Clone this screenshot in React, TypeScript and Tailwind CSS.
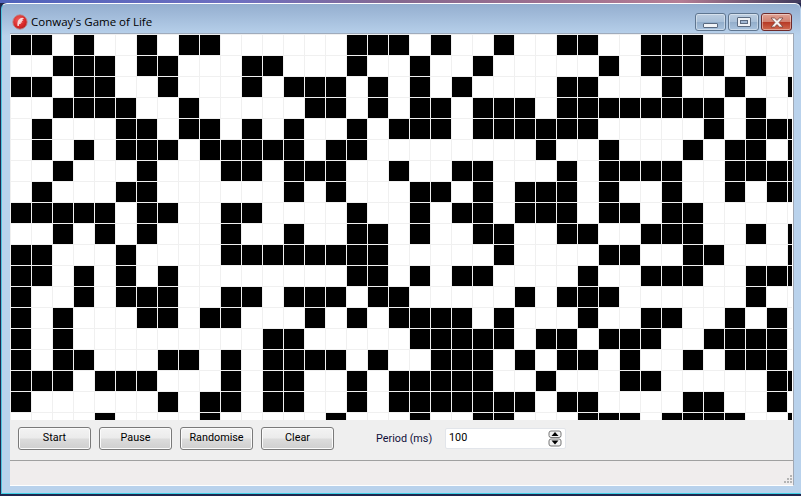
const liveCells = [
  [0, 1, 3, 6, 8, 9, 16, 17, 18, 20, 23, 26, 27, 30, 31, 32],
  [2, 3, 4, 6, 7, 11, 12, 16, 19, 22, 28, 30, 31, 32, 33, 35],
  [0, 1, 3, 4, 7, 11, 13, 14, 15, 17, 19, 21, 26, 27, 31, 34, 37],
  [2, 3, 4, 5, 8, 14, 15, 17, 19, 20, 22, 23, 24, 26, 27, 28, 29, 30, 31, 32, 33, 35],
  [1, 5, 6, 8, 9, 11, 13, 16, 18, 19, 20, 22, 23, 24, 25, 26, 27, 33, 35, 36, 37],
  [1, 3, 5, 6, 7, 9, 10, 11, 12, 13, 15, 16, 25, 28, 32, 34, 35, 37],
  [2, 6, 10, 11, 13, 14, 15, 18, 21, 22, 26, 28, 29, 30, 31, 34, 35, 36, 37],
  [1, 5, 6, 13, 15, 19, 20, 22, 24, 25, 26, 28, 31, 34, 36, 37],
  [0, 1, 2, 3, 4, 6, 7, 10, 11, 16, 19, 21, 22, 24, 25, 26, 28, 29, 31, 32],
  [2, 4, 6, 10, 13, 16, 17, 19, 22, 23, 26, 27, 30, 31, 32, 35, 37],
  [0, 1, 5, 10, 11, 12, 13, 14, 15, 16, 17, 23, 28, 29, 32, 33, 37],
  [0, 1, 3, 5, 7, 16, 17, 19, 21, 22, 27, 30, 31, 32, 35, 36, 37],
  [0, 3, 5, 6, 7, 10, 11, 13, 14, 15, 17, 18, 24, 26, 27, 28, 35],
  [0, 2, 6, 7, 9, 10, 14, 16, 18, 19, 20, 21, 23, 27, 30, 31, 34, 36],
  [0, 2, 12, 13, 19, 20, 21, 22, 23, 25, 26, 28, 29, 30, 33, 34, 35, 36],
  [0, 2, 3, 7, 8, 10, 12, 13, 14, 15, 17, 20, 21, 22, 24, 26, 27, 29, 32, 34, 35, 36],
  [0, 1, 2, 4, 5, 6, 10, 12, 13, 16, 18, 19, 20, 21, 22, 25, 29, 30, 36, 37],
  [0, 7, 9, 10, 12, 13, 16, 18, 19, 20, 21, 22, 23, 24, 26, 27, 32, 33, 36],
  [4, 9, 15, 19, 22, 23, 27, 28, 29, 31, 32, 33, 34, 37],
];

const buttons = ["Start", "Pause", "Randomise", "Clear"];

const AppIcon = () => (
  <svg width="16" height="16" viewBox="0 0 16 16">
    <defs>
      <radialGradient id="ball" cx="0.4" cy="0.35" r="0.75">
        <stop offset="0" stopColor="#ee5a5a" />
        <stop offset="0.65" stopColor="#d62626" />
        <stop offset="1" stopColor="#a51c1c" />
      </radialGradient>
    </defs>
    <circle cx="8" cy="8" r="7.2" fill="url(#ball)" stroke="#b98a8a" strokeWidth="0.9" />
    <path
      d="M5.5 12 C5 9 5.5 6 8 4.4 C9.6 3.4 11.4 3.6 12 4.6 L10.2 5.4 L11.4 6.6 L9.6 7 L10.4 8.4 L8.6 8.4 L8.8 10 L7.2 10 L6.8 12 Z"
      fill="#f8d8d8"
    />
  </svg>
);

const WindowButton = ({ className, children }: { className: string; children: React.ReactNode }) => (
  <div className={`flex h-[18px] w-[31px] items-center justify-center rounded-[3px] border shadow-[inset_0_0_0_1px_rgba(255,255,255,0.4)] ${className}`}>
    {children}
  </div>
);

const TitleBar = () => (
  <div className="flex h-[29px] items-start pl-[10px]">
    <div className="mt-[10px]">
      <AppIcon />
    </div>
    <span className="mt-[9px] ml-[3px] font-['Open_Sans',sans-serif] text-[11.5px] leading-[18px] text-black">
      Conway's Game of Life
    </span>
    <div className="mt-[9px] ml-[543px] flex gap-[2px]">
      <WindowButton className="border-[#5f7690] bg-[linear-gradient(180deg,#bccde0_0%,#a8bfd8_50%,#93aecb_52%,#a9c3de_100%)]">
        <div className="mt-[6px] h-[5px] w-[15px] rounded-[1px] border border-[#5a6a80] bg-[#f2f4f7]" />
      </WindowButton>
      <WindowButton className="border-[#5f7690] bg-[linear-gradient(180deg,#bccde0_0%,#a8bfd8_50%,#93aecb_52%,#a9c3de_100%)]">
        <div className="flex h-[10px] w-[14px] items-center justify-center rounded-[1px] border border-[#5a6a80] bg-[#eef1f5]">
          <div className="h-[4px] w-[8px] border border-[#5a6a80] bg-[#9fb6d2]" />
        </div>
      </WindowButton>
      <WindowButton className="border-[#6e2a2a] bg-[linear-gradient(180deg,#e0a294_0%,#d0806f_50%,#b73a26_52%,#d06a50_100%)]">
        <svg width="16" height="11" viewBox="0 0 16 11">
          <path d="M2 1 L5.5 1 L8 3.4 L10.5 1 L14 1 L10 5.5 L14 10 L10.5 10 L8 7.6 L5.5 10 L2 10 L6 5.5 Z" fill="#f6f2f0" stroke="#6b3a34" strokeWidth="0.7" />
        </svg>
      </WindowButton>
    </div>
  </div>
);

const LifeGrid = () => (
  <div className="h-[386px] w-[782px] overflow-hidden bg-[#f0f0f0]">
    <div className="grid grid-cols-[repeat(38,20px)] grid-rows-[repeat(19,20px)] gap-px p-px">
      {liveCells.flatMap((row, r) =>
        Array.from({ length: 38 }, (_, c) => (
          <div key={`${r}-${c}`} className={row.includes(c) ? "bg-black" : "bg-white"} />
        ))
      )}
    </div>
  </div>
);

const SpinnerArrows = () => (
  <svg width="14" height="17" viewBox="0 0 14 17">
    <rect x="1" y="1" width="12" height="6.5" rx="2" fill="#f2f2f2" stroke="#777" />
    <path d="M7 2 L10.5 6 L3.5 6 Z" fill="#000" />
    <rect x="1" y="9" width="12" height="7" rx="2" fill="#f2f2f2" stroke="#777" />
    <path d="M3.5 10.5 L10.5 10.5 L7 14.5 Z" fill="#000" />
  </svg>
);

const Controls = () => (
  <div className="flex h-[40px] gap-[8px] bg-[#efefef] pt-[7px] pl-[8px] font-['Roboto',sans-serif] text-[10.8px]">
    {buttons.map((label) => (
      <button
        key={label}
        className="h-[23px] w-[73px] rounded-[3px] border border-[#7a7a7a] bg-[linear-gradient(180deg,#f3f3f3_0%,#ebebeb_48%,#dcdcdc_52%,#cfcfcf_100%)] text-black shadow-[inset_0_0_0_1px_#fbfbfb]"
      >
        {label}
      </button>
    ))}
    <span className="ml-[34px] w-[61px] pt-[4px] text-[#10103a]">Period (ms)</span>
    <div className="mt-px flex h-[21px] w-[121px] items-center justify-between rounded-[2px] border border-[#e2e5ea] bg-white px-[3px] text-black">
      <span>100</span>
      <SpinnerArrows />
    </div>
  </div>
);

const StatusBar = () => (
  <div className="flex h-[25px] items-end justify-end border-t border-[#a0a0a0] bg-[#f0eded]">
    <svg width="10" height="10" viewBox="0 0 10 10" className="mb-px">
      <path d="M7 1h2v2H7zM4 4h2v2H4zM7 4h2v2H7zM1 7h2v2H1zM4 7h2v2H4zM7 7h2v2H7z" fill="#b4b4b4" />
    </svg>
  </div>
);

export default function App() {
  return (
    <div className="flex h-[496px] w-[801px] flex-col overflow-hidden bg-[#20264e]">
      <div className="h-[3px] bg-[linear-gradient(90deg,#4f62bb_0%,#6f6fc0_30%,#86688f_50%,#a0708f_70%,#b57d94_85%,#3f3a5c_100%)]" />
      <div className="ml-px flex h-[491px] w-[800px] flex-col rounded-t-[6px] border-x border-t border-b border-l-[#4fc3de] border-r-[#b9d2ec] border-t-white border-b-[#3fd0e6] bg-[linear-gradient(180deg,#94aecf_0px,#b9d2ec_32px,#b9d2ec_100%)]">
        <TitleBar />
        <div className="ml-[8px] w-[784px] border-t border-r border-b border-l-0 border-t-[#9fabbc] border-r-[#a0a8b4] border-b-white bg-white">
          <LifeGrid />
          <Controls />
          <StatusBar />
        </div>
      </div>
    </div>
  );
}
